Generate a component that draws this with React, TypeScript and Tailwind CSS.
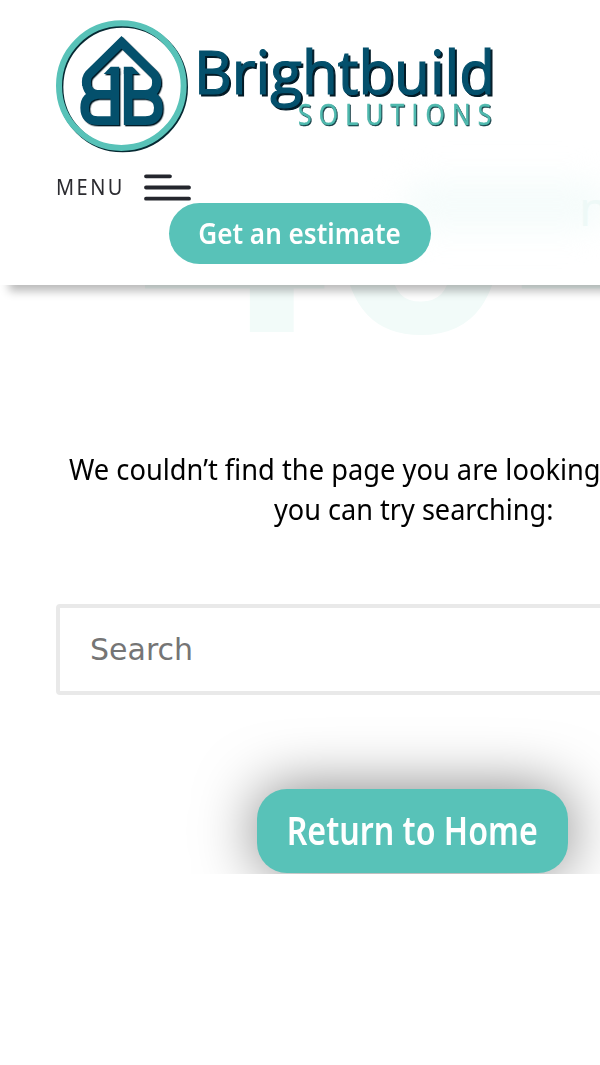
function HouseMark() {
  const half = (
    <>
      <path
        d="M194 253 H143 Q114 253 109 221 M143 253 Q104 257 104 293 Q104 332 143 332 H194.500 V180"
        fill="none"
        stroke="currentColor"
        strokeWidth="26"
      />
      <path d="M161 192 L182 170 H207.500 V192 Z" fill="currentColor" />
    </>
  );

  return (
    <g className="text-[#04506c] drop-shadow-[4px_4px_0_#021a26]">
      <path
        d="M110 226 Q107 204 116 194 L214.500 97 L313 194 Q322 204 319 226"
        fill="none"
        stroke="currentColor"
        strokeWidth="27"
        strokeMiterlimit="10"
      />
      {half}
      <g transform="translate(429 0) scale(-1 1)">{half}</g>
    </g>
  );
}

function Logo() {
  return (
    <svg width="460" height="150" viewBox="50 10 460 150" className="block" aria-label="Brightbuild Solutions">
      <g transform="translate(50 10) scale(0.33333)">
        <circle cx="218" cy="231" r="187" fill="none" stroke="#062a33" strokeWidth="18" />
        <circle cx="214" cy="227" r="187" fill="none" stroke="#58c2b8" strokeWidth="18" />
        <HouseMark />
      </g>
      <text
        x="194"
        y="94"
        textLength="301"
        lengthAdjust="spacingAndGlyphs"
        fill="#04506c"
        stroke="#04506c"
        strokeWidth="1.200"
        className="font-['Open_Sans','Noto_Sans',sans-serif] text-[61px] drop-shadow-[2px_2px_0_#021a26]"
      >
        Brightbuild
      </text>
      <g transform="translate(298 124.500) scale(0.87 1)">
        <text
          x="0"
          y="0"
          fill="#50baaf"
          stroke="#50baaf"
          strokeWidth="0.500"
          className="font-['Open_Sans','Noto_Sans',sans-serif] text-[28.500px] tracking-[8.250px] drop-shadow-[1.200px_1px_0_#063038]"
        >
          SOLUTIONS
        </text>
      </g>
    </svg>
  );
}

function Header() {
  return (
    <header className="relative z-10 h-[285px] w-[820px] bg-white/97 pt-2.5 pl-[50px] shadow-[9px_6px_9px_rgba(0,0,0,0.28)]">
      <div aria-hidden="true" className="absolute top-[180px] left-[400px] h-[50px] w-[210px] rounded-full bg-[#f5fcfb] blur-[16px]" />
      <div className="relative">
        <Logo />
        <div className="flex h-[43px] items-start pt-[14px] pl-[6px]">
          <span className="-mt-px h-7 w-[88px] origin-left scale-x-[0.950] text-[21px] leading-7 tracking-[2.600px] text-[#2b2b30]">MENU</span>
          <svg width="47" height="28" viewBox="0 0 47 28" className="block" stroke="#24262d" strokeWidth="3.800" strokeLinecap="round">
            <path d="M2 2.300H26M2 13.500H45M2 24.700H45" />
          </svg>
        </div>
        <a href="#" className="ml-[119px] flex h-[61px] w-[262px] items-center justify-center rounded-full bg-[#58c2b8] pb-0.5 text-[29px] font-semibold text-white">
          <span className="scale-x-[0.900] whitespace-nowrap">Get an estimate</span>
        </a>
      </div>
    </header>
  );
}

export default function App() {
  return (
    <div className="h-[1065px] w-full overflow-hidden bg-white font-['Noto_Sans','Open_Sans',sans-serif] text-black">
      <main className="relative h-[874px] overflow-hidden">
        <div aria-hidden="true" className="absolute top-[70px] left-[140px] origin-left scale-x-[1.080] font-['Liberation_Sans',sans-serif] text-[310px] leading-none font-bold tracking-[2px] whitespace-nowrap text-[#f2fbf9]">
          404
        </div>
        <span aria-hidden="true" className="absolute top-[184px] left-[579px] z-20 text-[48px] leading-none text-[#eef9f7]">n</span>
        <Header />

        <p className="mt-[165px] pl-[69px] text-[28.500px] leading-[39.500px] whitespace-nowrap">
          <span className="block origin-left scale-x-[0.957]">We couldn’t find the page you are looking for. Maybe</span>
          <span className="ml-[205px] block origin-left scale-x-[0.951]">you can try searching:</span>
        </p>

        <form className="mt-[75px] pl-14">
          <input
            type="search"
            placeholder="Search"
            className="block h-[91px] w-[712px] rounded-[4px] border-4 border-[#e9e9e9] bg-white px-[30px] font-['DejaVu_Sans',sans-serif] text-[30px] outline-none placeholder:text-[#757575]"
          />
        </form>

        <a href="#" className="mt-[94px] ml-[257px] flex h-[84px] w-[311px] items-center justify-center rounded-[30px] bg-[#58c2b8] pb-0.5 text-[39px] font-semibold text-white shadow-[0_0_60px_rgba(0,0,0,0.500)]">
          <span className="scale-x-[0.825] whitespace-nowrap">Return to Home</span>
        </a>
      </main>
    </div>
  );
}
